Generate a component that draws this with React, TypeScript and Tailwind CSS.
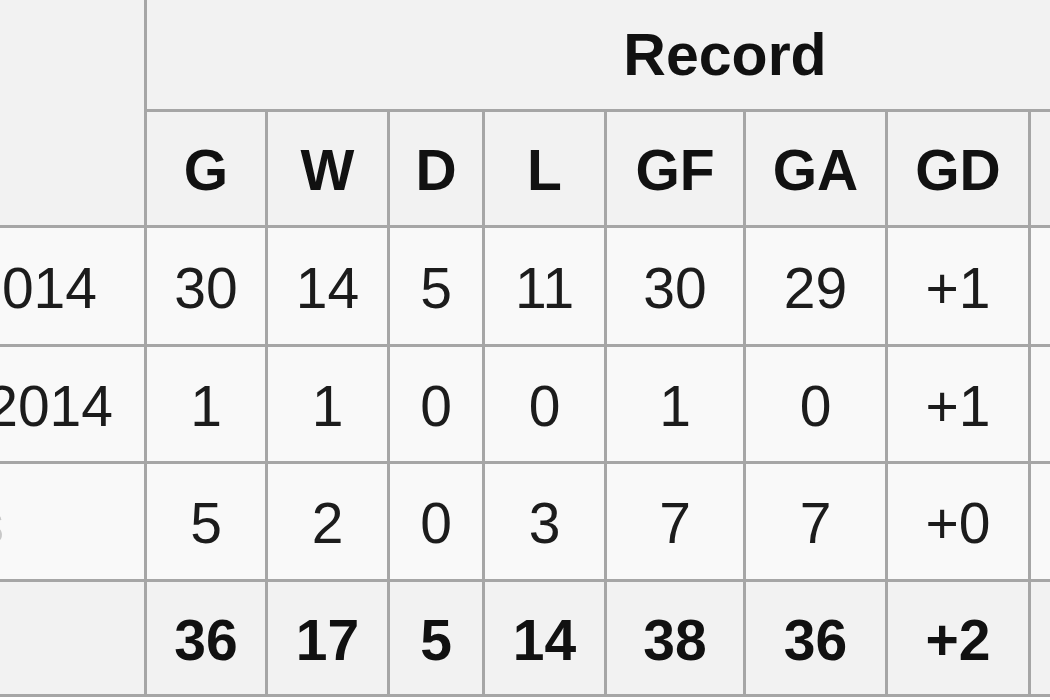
import React from "react";

const headers = ["G", "W", "D", "L", "GF", "GA", "GD", ""];

const rows: { label: string; pr: string; values: string[] }[] = [
  { label: "2013–2014", pr: "pr-[47px]", values: ["30", "14", "5", "11", "30", "29", "+1", ""] },
  { label: "2014–2014", pr: "pr-[31px]", values: ["1", "1", "0", "0", "1", "0", "+1", ""] },
  { label: "Playoffs", pr: "pr-[140px]", values: ["5", "2", "0", "3", "7", "7", "+0", ""] },
];

const totals = ["36", "17", "5", "14", "38", "36", "+2", ""];

export default function App() {
  return (
    <div
      className="w-[1050px] h-[700px] overflow-hidden bg-white text-[#1c1c1c]"
      style={{ fontFamily: '"Liberation Sans", Arial, sans-serif' }}
    >
      <div className="grid w-max grid-cols-[144px_118px_119px_92px_119px_136px_139px_140px_272px] grid-rows-[109px_113px_116px_114px_115px_112px] gap-[3px] bg-[#a6a6a6] pb-[3px] text-[57px] leading-none">
        <div className="row-span-2 bg-[#f2f2f2]" />
        <div className="col-span-8 flex items-center justify-center bg-[#f2f2f2] pt-[2px] text-[59px] font-bold text-[#111]">
          Record
        </div>
        {headers.map((h, i) => (
          <div key={i} className="flex items-center justify-center bg-[#f2f2f2] pt-[4px] font-bold text-[#111]">
            {h}
          </div>
        ))}
        {rows.map((r) => (
          <React.Fragment key={r.label}>
            <div className={`flex items-center justify-end overflow-hidden whitespace-nowrap bg-[#f9f9f9] pt-[4px] text-[#6a6a6a] ${r.pr}`}>
              <span className={r.label === "Playoffs" ? "text-[#c8c8c8]" : "text-[#1c1c1c]"}>{r.label}</span>
            </div>
            {r.values.map((v, i) => (
              <div key={i} className="flex items-center justify-center bg-[#f9f9f9] pt-[4px]">
                {v}
              </div>
            ))}
          </React.Fragment>
        ))}
        <div className="bg-[#f2f2f2]" />
        {totals.map((v, i) => (
          <div key={i} className="flex items-center justify-center bg-[#f2f2f2] pt-[4px] font-bold text-[#111]">
            {v}
          </div>
        ))}
      </div>
    </div>
  );
}
